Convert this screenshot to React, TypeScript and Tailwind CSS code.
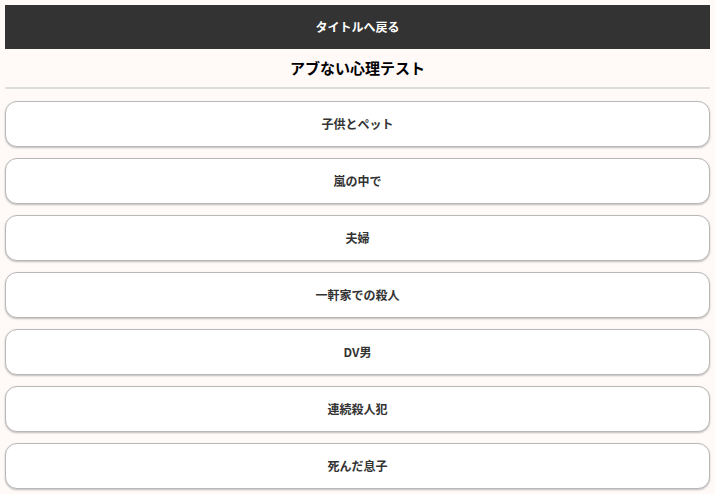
const items = ["子供とペット", "嵐の中で", "夫婦", "一軒家での殺人", "DV男", "連続殺人犯", "死んだ息子"];

export default function App() {
  return (
    <div
      className="min-h-screen bg-[#fffaf8] px-[5px] pt-[5px]"
      style={{ fontFamily: '"Noto Sans CJK JP", "Noto Sans", sans-serif' }}
    >
      <a className="flex h-[44px] items-center justify-center bg-[#333333] text-[12px] font-bold text-white">
        タイトルへ戻る
      </a>
      <h1 className="flex h-[40px] items-center justify-center border-b-2 border-[#dddddd] text-[15px] font-bold text-black">
        アブない心理テスト
      </h1>
      <ul className="mt-[12px] flex flex-col gap-[11px]">
        {items.map((item) => (
          <li key={item}>
            <button
              type="button"
              className="flex h-[46px] w-full items-center justify-center rounded-[12px] border border-[#b8b8b8] bg-white text-[12px] font-bold text-[#333333] shadow-[0_1px_2px_rgba(0,0,0,0.25)]"
            >
              {item}
            </button>
          </li>
        ))}
      </ul>
    </div>
  );
}
